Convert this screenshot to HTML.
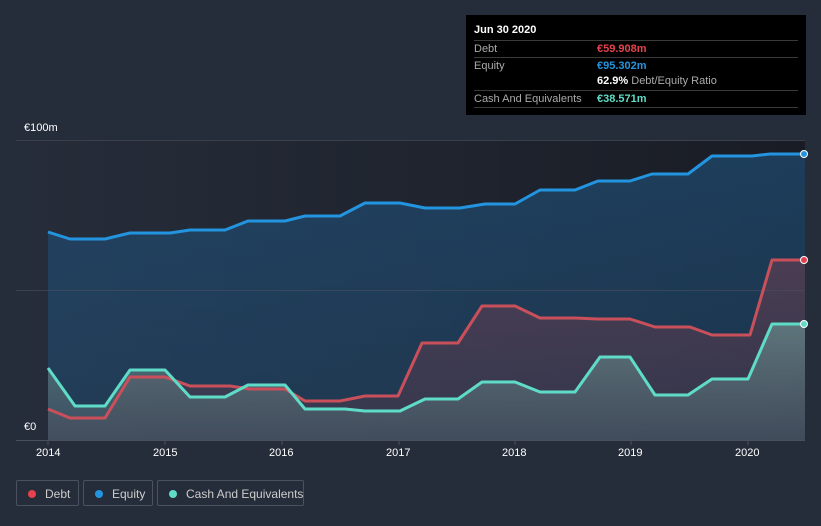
<!DOCTYPE html>
<html><head><meta charset="utf-8"><style>
body{margin:0;width:821px;height:526px;background:#262d3a;font-family:"Liberation Sans",sans-serif;overflow:hidden;position:relative}
.tip{position:absolute;left:466px;top:15px;width:340px;height:100px;background:#000;color:#fff;font-size:11px}
.tip .r{position:absolute;left:8px;width:324px;border-top:1px solid #3a3a3a;height:16px;line-height:16px;color:#aaa}
.tip .v{position:absolute;left:123px;font-weight:bold}
.lab{position:absolute;color:#fff;font-size:11px}
.leg{position:absolute;top:480px;height:26px;border:1px solid #4a5160;border-radius:2px;color:#ccc;font-size:12px;line-height:26px;box-sizing:border-box;white-space:nowrap}
.leg i{position:absolute;left:11px;top:9px;width:8px;height:8px;border-radius:50%}
</style></head><body>
<svg width="821" height="526" style="position:absolute;left:0;top:0">
<defs>
<linearGradient id="bg" x1="0" y1="0" x2="1" y2="0"><stop offset="0" stop-color="#262d3a"/><stop offset="1" stop-color="#191c24"/></linearGradient>
<linearGradient id="ge" x1="0" y1="0" x2="0" y2="1"><stop offset="0" stop-color="#1f4f78" stop-opacity=".65"/><stop offset="1" stop-color="#1f4f78" stop-opacity=".45"/></linearGradient>
<linearGradient id="gd" x1="0" y1="0" x2="0" y2="1"><stop offset="0" stop-color="#7a4050" stop-opacity=".5"/><stop offset="1" stop-color="#5a3848" stop-opacity=".35"/></linearGradient>
<linearGradient id="gc" x1="0" y1="0" x2="0" y2="1"><stop offset="0" stop-color="#6a8e8e" stop-opacity=".7"/><stop offset="1" stop-color="#4a5a66" stop-opacity=".6"/></linearGradient>
</defs>
<rect x="16" y="140" width="789" height="300" fill="url(#bg)"/>
<path d="M48,232 L70,239 L105,239 L130,233 L170,233 L190,230 L225,230 L248,221 L285,221 L305,216 L340,216 L365,203 L400,203 L425,208 L460,208 L485,204 L515,204 L540,190 L575,190 L598,181 L630,181 L652,174 L688,174 L712,156 L752,156 L770,154 L805,154 L805,440 L48,440Z" fill="url(#ge)"/>
<path d="M48,409 L70,418 L105,418 L130,377 L165,377 L190,386 L230,386 L250,389 L285,389 L305,401 L340,401 L365,396 L398,396 L422,343 L458,343 L482,306 L515,306 L540,318 L575,318 L598,319 L630,319 L655,327 L690,327 L712,335 L750,335 L772,260 L805,260 L805,440 L48,440Z" fill="url(#gd)"/>
<path d="M48,368 L75,406 L105,406 L130,370 L165,370 L190,397 L225,397 L248,385 L285,385 L305,409 L345,409 L365,411 L400,411 L425,399 L458,399 L482,382 L515,382 L540,392 L575,392 L600,357 L630,357 L655,395 L688,395 L712,379 L748,379 L772,324 L805,324 L805,440 L48,440Z" fill="url(#gc)"/>
<line x1="16" y1="140.5" x2="805" y2="140.5" stroke="#3a404c"/>
<line x1="16" y1="290.5" x2="805" y2="290.5" stroke="#4a5060" stroke-opacity=".6"/>
<line x1="16" y1="440.5" x2="805" y2="440.5" stroke="#4a5060"/>
<g fill="none" stroke-width="3" stroke-linejoin="round">
<path d="M48,232 L70,239 L105,239 L130,233 L170,233 L190,230 L225,230 L248,221 L285,221 L305,216 L340,216 L365,203 L400,203 L425,208 L460,208 L485,204 L515,204 L540,190 L575,190 L598,181 L630,181 L652,174 L688,174 L712,156 L752,156 L770,154 L805,154" stroke="#2394df"/>
<path d="M48,409 L70,418 L105,418 L130,377 L165,377 L190,386 L230,386 L250,389 L285,389 L305,401 L340,401 L365,396 L398,396 L422,343 L458,343 L482,306 L515,306 L540,318 L575,318 L598,319 L630,319 L655,327 L690,327 L712,335 L750,335 L772,260 L805,260" stroke="#c9505a"/>
<path d="M48,368 L75,406 L105,406 L130,370 L165,370 L190,397 L225,397 L248,385 L285,385 L305,409 L345,409 L365,411 L400,411 L425,399 L458,399 L482,382 L515,382 L540,392 L575,392 L600,357 L630,357 L655,395 L688,395 L712,379 L748,379 L772,324 L805,324" stroke="#5fdcc8"/>
</g>
<circle cx="804" cy="154" r="3.5" fill="#2394df" stroke="#fff"/>
<circle cx="804" cy="260" r="3.5" fill="#e04050" stroke="#fff"/>
<circle cx="804" cy="324" r="3.5" fill="#5fdcc8" stroke="#fff"/>
<g stroke="#4a5060"><line x1="48" y1="440" x2="48" y2="445"/><line x1="165" y1="440" x2="165" y2="445"/><line x1="282" y1="440" x2="282" y2="445"/><line x1="399" y1="440" x2="399" y2="445"/><line x1="515" y1="440" x2="515" y2="445"/><line x1="631" y1="440" x2="631" y2="445"/><line x1="748" y1="440" x2="748" y2="445"/></g>
</svg>
<div class="lab" style="left:24px;top:122px">€100m</div>
<div class="lab" style="left:24px;top:421px">€0</div>
<div class="lab" style="left:36px;top:447px">2014</div>
<div class="lab" style="left:153px;top:447px">2015</div>
<div class="lab" style="left:269px;top:447px">2016</div>
<div class="lab" style="left:386px;top:447px">2017</div>
<div class="lab" style="left:502px;top:447px">2018</div>
<div class="lab" style="left:618px;top:447px">2019</div>
<div class="lab" style="left:735px;top:447px">2020</div>
<div class="tip">
<div style="position:absolute;left:8px;top:9px;font-weight:bold">Jun 30 2020</div>
<div class="r" style="top:25px">Debt<span class="v" style="color:#e5424d">€59.908m</span></div>
<div class="r" style="top:42px">Equity<span class="v" style="color:#2394df">€95.302m</span></div>
<div class="r" style="top:58px;border-top:none"><span class="v" style="color:#fff;white-space:nowrap">62.9% <span style="color:#aaa;font-weight:normal">Debt/Equity Ratio</span></span></div>
<div class="r" style="top:75px">Cash And Equivalents<span class="v" style="color:#5fdcc8">€38.571m</span></div>
<div class="r" style="top:92px;height:0"></div>
</div>
<div class="leg" style="left:16px;width:63px"><i style="background:#e5424d"></i><span style="position:absolute;left:28px">Debt</span></div>
<div class="leg" style="left:83px;width:70px"><i style="background:#2394df"></i><span style="position:absolute;left:28px">Equity</span></div>
<div class="leg" style="left:157px;width:147px"><i style="background:#5fdcc8"></i><span style="position:absolute;left:28px">Cash And Equivalents</span></div>
</body></html>
